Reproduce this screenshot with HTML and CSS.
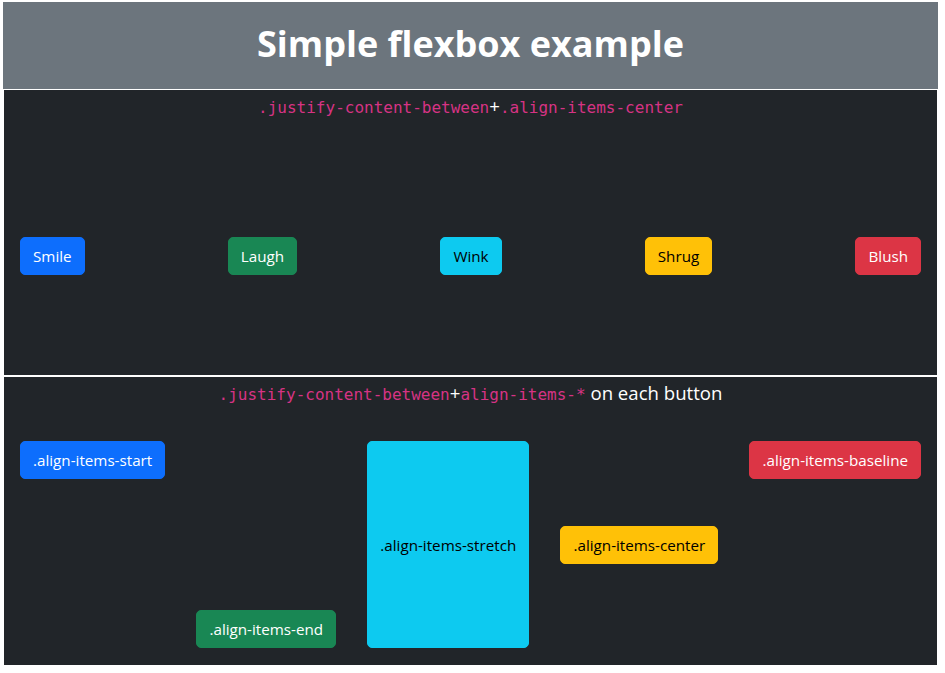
FILE: index.html
```html
<!DOCTYPE html>
<html lang="en">
<head>
<meta charset="utf-8">
<title>Simple flexbox example</title>
<link rel="stylesheet" href="styles.css">
</head>
<body>
<div class="page">
  <header class="banner">
    <h1 class="banner-title">Simple flexbox example</h1>
  </header>

  <section class="panel">
    <h5 class="panel-title"><code>.justify-content-between</code>+<code>.align-items-center</code></h5>
    <div class="row row-center">
      <button class="btn btn-primary">Smile</button>
      <button class="btn btn-success">Laugh</button>
      <button class="btn btn-info">Wink</button>
      <button class="btn btn-warning">Shrug</button>
      <button class="btn btn-danger">Blush</button>
    </div>
  </section>

  <section class="panel">
    <h5 class="panel-title"><code>.justify-content-between</code>+<code>align-items-*</code> on each button</h5>
    <div class="row row-mixed">
      <button class="btn btn-primary self-start">.align-items-start</button>
      <button class="btn btn-success self-end">.align-items-end</button>
      <button class="btn btn-info self-stretch">.align-items-stretch</button>
      <button class="btn btn-warning self-center">.align-items-center</button>
      <button class="btn btn-danger self-baseline">.align-items-baseline</button>
    </div>
  </section>
</div>
</body>
</html>
```

FILE: styles.css
```css
* {
  box-sizing: border-box;
}

html, body {
  margin: 0;
  padding: 0;
  background: #ffffff;
}

body {
  font-family: "Open Sans", "Noto Sans", sans-serif;
  color: #ffffff;
}

.page {
  padding-top: 2px;
}

.banner {
  margin: 0 7px 0 3px;
  height: 87px;
  padding-bottom: 4px;
  background: #6c757d;
  display: flex;
  align-items: center;
  justify-content: center;
}

.banner-title {
  margin: 0;
  font-size: 36px;
  font-weight: 700;
  line-height: 1.2;
  color: #ffffff;
}

.panel {
  margin: 1px 8px 0 4px;
  background: #212529;
  padding: 4px 16px 17px;
}

.panel + .panel {
  margin-top: 2px;
}

.panel-title {
  margin: 0 0 36px;
  height: 24px;
  overflow: visible;
  text-align: center;
  font-size: 18.6px;
  font-weight: 400;
  line-height: 24px;
  color: #ffffff;
}

code {
  font-family: "DejaVu Sans Mono", "Liberation Mono", monospace;
  font-size: 16px;
  line-height: 1;
  color: #d63384;
}

.row {
  display: flex;
  justify-content: space-between;
}

.row-center {
  height: 204px;
  align-items: center;
}

.row-mixed {
  height: 207px;
  align-items: flex-start;
}

.btn {
  font-family: "Open Sans", "Noto Sans", sans-serif;
  font-size: 15.2px;
  line-height: 24px;
  padding: 6px 12px;
  border: 1px solid transparent;
  border-radius: 5px;
  margin: 0;
  cursor: pointer;
}

.btn-primary { background: #0d6efd; border-color: #0d6efd; color: #ffffff; }
.btn-success { background: #198754; border-color: #198754; color: #ffffff; }
.btn-info { background: #0dcaf0; border-color: #0dcaf0; color: #000000; }
.btn-warning { background: #ffc107; border-color: #ffc107; color: #000000; }
.btn-danger { background: #dc3545; border-color: #dc3545; color: #ffffff; }

.self-start { align-self: flex-start; }
.self-end { align-self: flex-end; }
.self-center { align-self: center; }
.self-baseline { align-self: baseline; }
.self-stretch {
  align-self: stretch;
  display: flex;
  align-items: center;
  justify-content: center;
}
```
